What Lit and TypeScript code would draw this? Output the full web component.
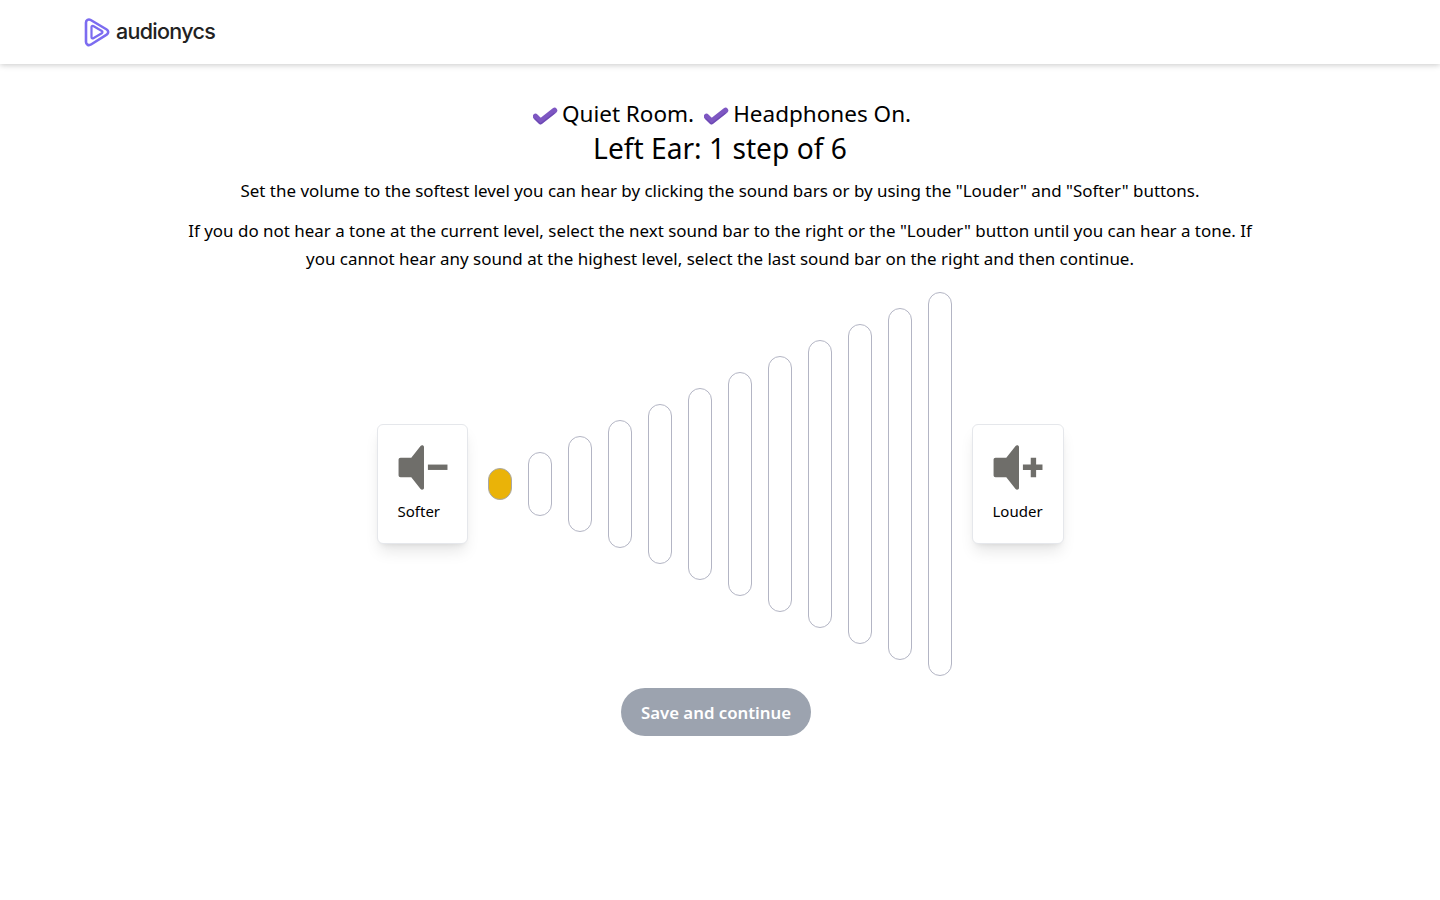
import { LitElement, html, css, svg } from 'lit';
import { customElement } from 'lit/decorators.js';

const BAR_COUNT = 12;

const checkIcon = html`<svg class="check" width="26" height="22" viewBox="0 0 26 22">
  <path d="M2.500 11.500 7.500 16.500 21.500 5.500" fill="none" stroke="#7e57c2" stroke-width="5.500" stroke-linecap="round" stroke-linejoin="round"/>
  <path d="M2 14 7.500 19 21 8.500" fill="none" stroke="#5e3ea8" stroke-width="1.500" stroke-linecap="round" stroke-linejoin="round" opacity=".5"/>
</svg>`;

const speaker = svg`<path d="M0 15c0-1.200.8-2 2-2h11L22.500 1c1-1.200 3.500-.8 3.500 1v42c0 1.800-2.500 2.200-3.500 1L13 33H2c-1.200 0-2-.8-2-2z" fill="#6f6e6a"/>`;

const softerIcon = html`<svg width="51" height="46" viewBox="0 0 51 46">
  ${speaker}<rect x="30" y="20" width="20" height="5.500" fill="#6f6e6a"/>
</svg>`;

const louderIcon = html`<svg width="52" height="46" viewBox="0 0 52 46">
  ${speaker}<path d="M30 20h8v-7h5.500v7H50v5.500h-6.500V33H38v-7.500h-8z" fill="#6f6e6a"/>
</svg>`;

@customElement('app-root')
export class AppRoot extends LitElement {
  static styles = css`
    :host {
      display: block;
      min-height: 900px;
      background: #fff;
      color: #000;
      font-family: 'Noto Sans', 'Open Sans', sans-serif;
    }
    header {
      display: flex;
      align-items: center;
      height: 64px;
      padding-left: 83px;
      box-shadow: 0 1px 6px rgba(0, 0, 0, 0.22);
    }
    .logo {
      display: flex;
      align-items: center;
      gap: 5px;
    }
    .logo-text {
      font-family: 'Inter', sans-serif;
      font-size: 21.5px;
      font-weight: 500;
      letter-spacing: -0.7px;
      color: #222;
      line-height: 1;
    }
    main {
      display: flex;
      flex-direction: column;
      align-items: center;
      padding-top: 34px;
    }
    .status {
      display: flex;
      align-items: center;
      justify-content: center;
      margin-left: 4px;
      font-size: 22.500px;
      line-height: 32px;
    }
    .status span {
      display: flex;
      align-items: center;
      margin-right: 10px;
    }
    .status span:last-child {
      margin-right: 0;
    }
    .check {
      margin-right: 3px;
      margin-top: 4px;
    }
    h1 {
      margin: 0;
      font-size: 28.200px;
      font-weight: 400;
      line-height: 36px;
    }
    p {
      margin: 0;
      font-size: 16.950px;
      line-height: 28px;
      text-align: center;
      width: 1088px;
    }
    .intro {
      margin-top: 11px;
    }
    .detail {
      margin-top: 12px;
    }
    .meter {
      display: flex;
      align-items: center;
      gap: 20px;
      margin-top: 19px;
      height: 384px;
    }
    .card {
      display: flex;
      flex-direction: column;
      box-sizing: border-box;
      height: 120px;
      padding: 20px;
      background: #fff;
      border: 1px solid #e5e7eb;
      border-radius: 6px;
      box-shadow: 0 10px 15px -3px rgba(0, 0, 0, 0.1), 0 4px 6px -4px rgba(0, 0, 0, 0.1);
      font-size: 15px;
      line-height: 24px;
    }
    .card.softer {
      width: 91px;
    }
    .card.louder {
      width: 92px;
    }
    .card svg {
      display: block;
    }
    .card .label {
      margin-top: 9px;
      white-space: nowrap;
    }
    .bars {
      display: flex;
      align-items: center;
      gap: 16px;
    }
    .bar {
      box-sizing: border-box;
      width: 24px;
      border: 1px solid #b3b5c4;
      border-radius: 12px;
      background: #fff;
    }
    .bar.on {
      background: #eab308;
      border-color: #a8a8a8;
    }
    .save {
      margin: 12px 8px 0 0;
      width: 190px;
      height: 48px;
      border: none;
      border-radius: 24px;
      background: #9ca3af;
      color: #fff;
      font-family: inherit;
      font-size: 16.800px;
      font-weight: 600;
    }
  `;

  render() {
    const bars = Array.from({ length: BAR_COUNT }, (_, i) => (i + 1) * 32);
    return html`
      <header>
        <div class="logo">
          <svg width="28" height="30" viewBox="0 0 28 30">
            <path d="M3 5.500C3 3 5.500 1.700 7.700 3l16 9.500c2 1.200 2 4 0 5.200L8 27.500C5.500 29 3 27.500 3 25z" fill="none" stroke="#7c6cf0" stroke-width="2.600" stroke-linejoin="round"/>
            <path d="M8.500 10c0-1 1-1.500 1.800-1l8.500 5c.9.500.9 1.700 0 2.200l-8.500 5c-.8.500-1.800 0-1.800-1z" fill="none" stroke="#7c6cf0" stroke-width="2.200" stroke-linejoin="round"/>
          </svg>
          <span class="logo-text">audionycs</span>
        </div>
      </header>
      <main>
        <div class="status">
          <span>${checkIcon}Quiet Room.</span>
          <span>${checkIcon}Headphones On.</span>
        </div>
        <h1>Left Ear: 1 step of 6</h1>
        <p class="intro">Set the volume to the softest level you can hear by clicking the sound bars or by using the "Louder" and "Softer" buttons.</p>
        <p class="detail">If you do not hear a tone at the current level, select the next sound bar to the right or the "Louder" button until you can hear a tone. If you cannot hear any sound at the highest level, select the last sound bar on the right and then continue.</p>
        <div class="meter">
          <div class="card softer">${softerIcon}<span class="label">Softer</span></div>
          <div class="bars">
            ${bars.map(
              (h, i) => html`<div class="bar ${i === 0 ? 'on' : ''}" style="height:${h}px"></div>`
            )}
          </div>
          <div class="card louder">${louderIcon}<span class="label">Louder</span></div>
        </div>
        <button class="save">Save and continue</button>
      </main>
    `;
  }
}
